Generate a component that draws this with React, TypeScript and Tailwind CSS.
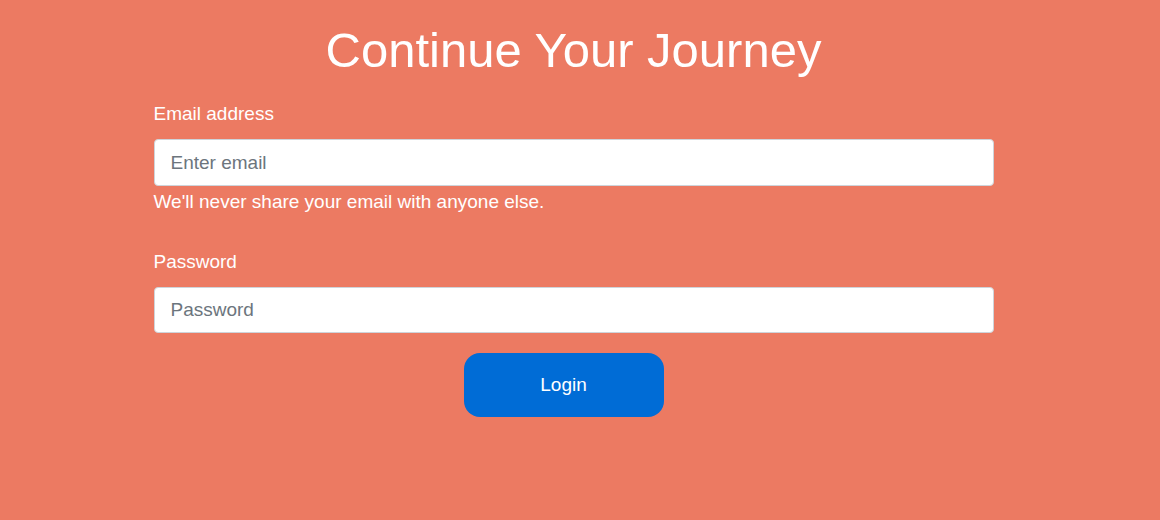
export default function App() {
  return (
    <div
      className="min-h-[520px] w-full bg-[#ec7a62] pr-[13px] text-white"
      style={{ fontFamily: '"Liberation Sans", Arial, sans-serif' }}
    >
      <div className="mx-auto flex w-[840px] flex-col pt-[20px]">
        <h1 className="text-center text-[49px] leading-[60px] font-normal">Continue Your Journey</h1>

        <form className="mt-[21px] flex flex-col" onSubmit={(e) => e.preventDefault()}>
          <label className="text-[19px] leading-[26px]">Email address</label>
          <input
            type="email"
            placeholder="Enter email"
            className="mt-[12px] h-[47px] w-full rounded-[4px] border border-[#ced4da] bg-white px-[16px] text-[19px] text-[#495057] placeholder:text-[#6c757d] outline-none"
          />
          <p className="mt-[2px] text-[19px] leading-[28px]">We'll never share your email with anyone else.</p>

          <label className="mt-[33px] text-[19px] leading-[26px]">Password</label>
          <input
            type="password"
            placeholder="Password"
            className="mt-[12px] h-[46px] w-full rounded-[4px] border border-[#ced4da] bg-white px-[16px] text-[19px] text-[#495057] placeholder:text-[#6c757d] outline-none"
          />

          <div className="mt-[20px] flex justify-center pr-[20px]">
            <button
              type="submit"
              className="h-[64px] w-[200px] rounded-[16px] bg-[#006cd6] text-[19px] text-white"
            >
              Login
            </button>
          </div>
        </form>
      </div>
    </div>
  )
}
